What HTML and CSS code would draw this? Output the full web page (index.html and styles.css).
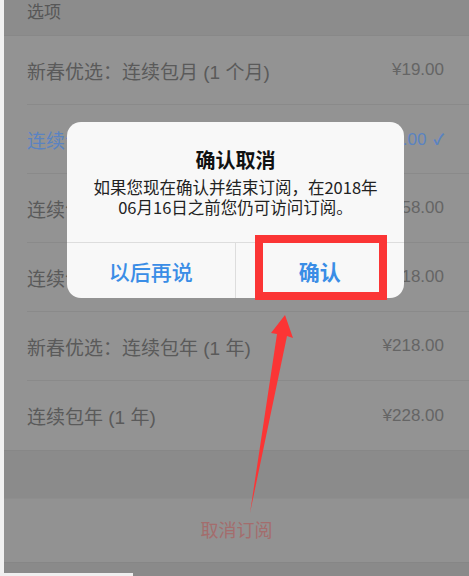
FILE: index.html
```html
<!DOCTYPE html>
<html lang="zh-CN">
<head>
<meta charset="utf-8">
<title>确认取消</title>
<link rel="stylesheet" href="styles.css">
</head>
<body>
<div class="page">
  <div class="main">
    <div class="strip"></div>
    <div class="screen">
      <div class="group-header"><span>选项</span></div>
      <ul class="options">
        <li class="option"><div class="option-inner"><span class="label">新春优选：连续包月 (1 个月)</span><span class="price">¥19.00</span></div></li>
        <li class="option selected"><div class="option-inner"><span class="label">连续包月 (1 个月)</span><span class="price">¥25.00 <span class="check">✓</span></span></div></li>
        <li class="option"><div class="option-inner"><span class="label">连续包季 (3 个月)</span><span class="price">¥58.00</span></div></li>
        <li class="option"><div class="option-inner"><span class="label">连续包半年 (6 个月)</span><span class="price">¥118.00</span></div></li>
        <li class="option"><div class="option-inner"><span class="label">新春优选：连续包年 (1 年)</span><span class="price">¥218.00</span></div></li>
        <li class="option last"><div class="option-inner"><span class="label">连续包年 (1 年)</span><span class="price">¥228.00</span></div></li>
      </ul>
      <div class="group-gap"></div>
      <div class="cancel-row">取消订阅</div>
      <div class="foot-band"></div>
    </div>
  </div>
  <div class="bottom-edge"><div class="bottom-light"></div><div class="bottom-gray"></div></div>

  <div class="alert">
    <div class="alert-body">
      <div class="alert-title">确认取消</div>
      <div class="alert-message">如果您现在确认并结束订阅，在2018年<br>06月16日之前您仍可访问订阅。</div>
    </div>
    <div class="alert-actions">
      <div class="alert-btn later">以后再说</div>
      <div class="alert-btn confirm">确认</div>
    </div>
  </div>

  <div class="highlight-box"></div>

  <svg class="arrow" width="469" height="576" viewBox="0 0 469 576">
    <polygon points="285,315 293,338 287,336 250,513 277,334 271,333" fill="#fb3535"/>
  </svg>
</div>
</body>
</html>
```

FILE: styles.css
```css
* { box-sizing: border-box; }

html, body {
  margin: 0;
  padding: 0;
  background: #efefef;
}

body {
  font-family: "Liberation Sans", "Noto Sans CJK SC", sans-serif;
}

.page {
  position: relative;
  width: 469px;
  height: 576px;
  overflow: hidden;
  display: flex;
  flex-direction: column;
}

.main {
  display: flex;
  height: 573px;
}

.strip {
  width: 4px;
  background: #f1f1f1;
}

.screen {
  flex: 1;
  display: flex;
  flex-direction: column;
  background: #939393;
}

.group-header {
  height: 36px;
  padding-left: 23px;
  background: #8c8c8c;
  border-bottom: 1px solid #888888;
  color: #575757;
  font-size: 17px;
  line-height: 26px;
}

.options {
  list-style: none;
  margin: 0;
  padding: 0;
}

.option {
  height: 69px;
  padding-left: 23px;
  background: #939393;
}

.option-inner {
  height: 100%;
  display: flex;
  align-items: center;
  justify-content: space-between;
  padding-right: 25px;
  border-bottom: 1px solid #8a8a8a;
  font-size: 19px;
}

.option.last .option-inner {
  border-bottom: none;
}

.label {
  color: #5a5a5a;
}

.price {
  color: #656565;
  font-size: 17px;
}

.selected .label,
.selected .price {
  color: #5a83c2;
}

.check {
  font-size: 15px;
  font-weight: 700;
  margin-left: 2px;
}

.group-gap {
  height: 48px;
  background: #8b8b8b;
  border-top: 1px solid #878787;
}

.cancel-row {
  height: 64px;
  display: flex;
  align-items: center;
  justify-content: center;
  padding-bottom: 3px;
  color: #a46d6d;
  font-size: 18px;
  background: #929292;
  border-top: 1px solid #8e8e8e;
}

.foot-band {
  flex: 1;
  background: #8a8a8a;
  border-top: 1px solid #868686;
}

.bottom-edge {
  display: flex;
  height: 3px;
}

.bottom-light {
  width: 133px;
  background: #efefef;
}

.bottom-gray {
  flex: 1;
  background: #8a8a8a;
}

/* Alert dialog (overlay) */
.alert {
  position: absolute;
  left: 67px;
  top: 122px;
  width: 337px;
  height: 176px;
  background: #f8f8f8;
  border-radius: 14px;
  display: flex;
  flex-direction: column;
  overflow: hidden;
}

.alert-body {
  padding: 25px 10px 0;
  text-align: center;
  font-family: "Noto Sans CJK SC", sans-serif;
}

.alert-title {
  font-size: 20px;
  font-weight: 700;
  line-height: 26px;
  color: #111111;
}

.alert-message {
  margin-top: 4px;
  font-size: 16.5px;
  line-height: 20px;
  color: #222222;
}

.alert-actions {
  margin-top: auto;
  height: 56px;
  display: grid;
  grid-template-columns: 1fr 1fr;
  border-top: 1px solid #dddddd;
}

.alert-btn {
  display: flex;
  align-items: center;
  justify-content: center;
  font-family: "Noto Sans CJK SC", sans-serif;
  font-size: 21px;
  color: #3a8de6;
}

.alert-btn.later {
  border-right: 1px solid #dddddd;
  font-weight: 500;
}

.alert-btn.confirm {
  font-weight: 700;
}

/* Annotation overlays */
.highlight-box {
  position: absolute;
  left: 255px;
  top: 235px;
  width: 132px;
  height: 65px;
  border: 8px solid #fb3535;
}

.arrow {
  position: absolute;
  left: 0;
  top: 0;
  pointer-events: none;
}
```
